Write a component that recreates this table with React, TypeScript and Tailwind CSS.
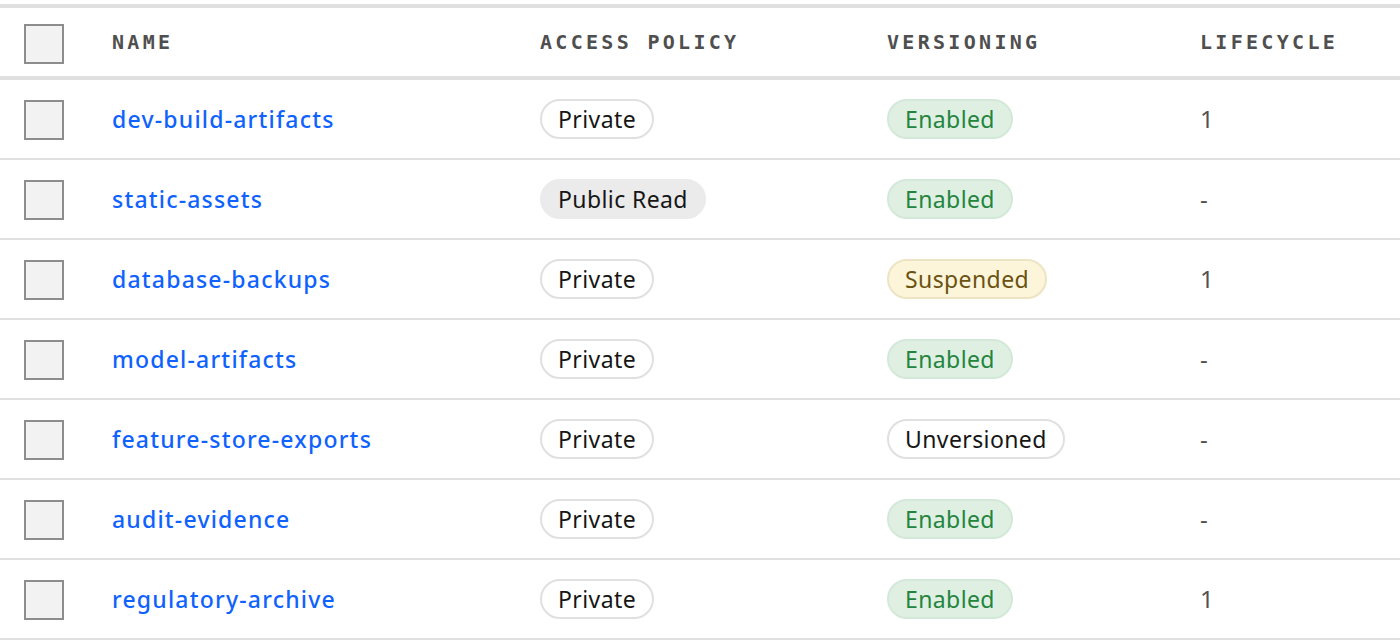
import React from "react";

type Versioning = "Enabled" | "Suspended" | "Unversioned";

const buckets: { name: string; access: string; versioning: Versioning; lifecycle: string }[] = [
  { name: "dev-build-artifacts", access: "Private", versioning: "Enabled", lifecycle: "1" },
  { name: "static-assets", access: "Public Read", versioning: "Enabled", lifecycle: "-" },
  { name: "database-backups", access: "Private", versioning: "Suspended", lifecycle: "1" },
  { name: "model-artifacts", access: "Private", versioning: "Enabled", lifecycle: "-" },
  { name: "feature-store-exports", access: "Private", versioning: "Unversioned", lifecycle: "-" },
  { name: "audit-evidence", access: "Private", versioning: "Enabled", lifecycle: "-" },
  { name: "regulatory-archive", access: "Private", versioning: "Enabled", lifecycle: "1" },
];

const cols = "grid grid-cols-[88px_428px_347px_313px_1fr] items-center";

function Checkbox() {
  return <div className="w-10 h-10 border-2 border-[#8d8d8d] bg-[#f2f2f2]" />;
}

function AccessBadge({ value }: { value: string }) {
  const pub = value === "Public Read";
  return (
    <span
      className={
        pub
          ? "inline-flex h-10 items-center rounded-full border-2 border-[#ebebeb] bg-[#ebebeb] px-4 text-[#161616]"
          : "inline-flex h-10 items-center rounded-full border-2 border-[#e0e0e0] bg-white px-4 text-[#161616]"
      }
    >
      {value}
    </span>
  );
}

function VersionBadge({ value }: { value: Versioning }) {
  let cls = "border-[#e0e0e0] bg-white text-[#161616]";
  if (value === "Enabled") cls = "border-[#d4e8d9] bg-[#dff0e3] text-[#24843e]";
  if (value === "Suspended") cls = "border-[#ede4c4] bg-[#fdf5da] text-[#6b5212]";
  return (
    <span className={"inline-flex h-10 items-center rounded-full border-2 px-4 " + cls}>
      {value}
    </span>
  );
}

export default function App() {
  return (
    <div className="w-[1400px] h-[640px] bg-white pt-1 overflow-hidden font-['Noto_Sans',sans-serif] text-[23px] tracking-[0.4px]">
      <div className="border-t-4 border-[#e0e0e0]">
        <div className={cols + " h-[72px] border-b-4 border-[#e0e0e0] font-['DejaVu_Sans_Mono',monospace] text-[20px] font-bold tracking-[3.3px] text-[#4f4f4f]"}>
          <div className="pl-6 mt-1">
            <Checkbox />
          </div>
          <div className="px-6">NAME</div>
          <div className="px-6">ACCESS POLICY</div>
          <div className="px-6">VERSIONING</div>
          <div className="px-6">LIFECYCLE</div>
        </div>
        {buckets.map((b) => (
          <div key={b.name} className={cols + " h-20 border-b-2 border-[#e0e0e0]"}>
            <div className="pl-6 mt-0.5">
              <Checkbox />
            </div>
            <div className="px-6 font-medium tracking-[1.2px] text-[#0f62fe]">{b.name}</div>
            <div className="px-6">
              <AccessBadge value={b.access} />
            </div>
            <div className="px-6">
              <VersionBadge value={b.versioning} />
            </div>
            <div className="px-6 text-[24px] text-[#525252]">{b.lifecycle}</div>
          </div>
        ))}
      </div>
    </div>
  );
}
